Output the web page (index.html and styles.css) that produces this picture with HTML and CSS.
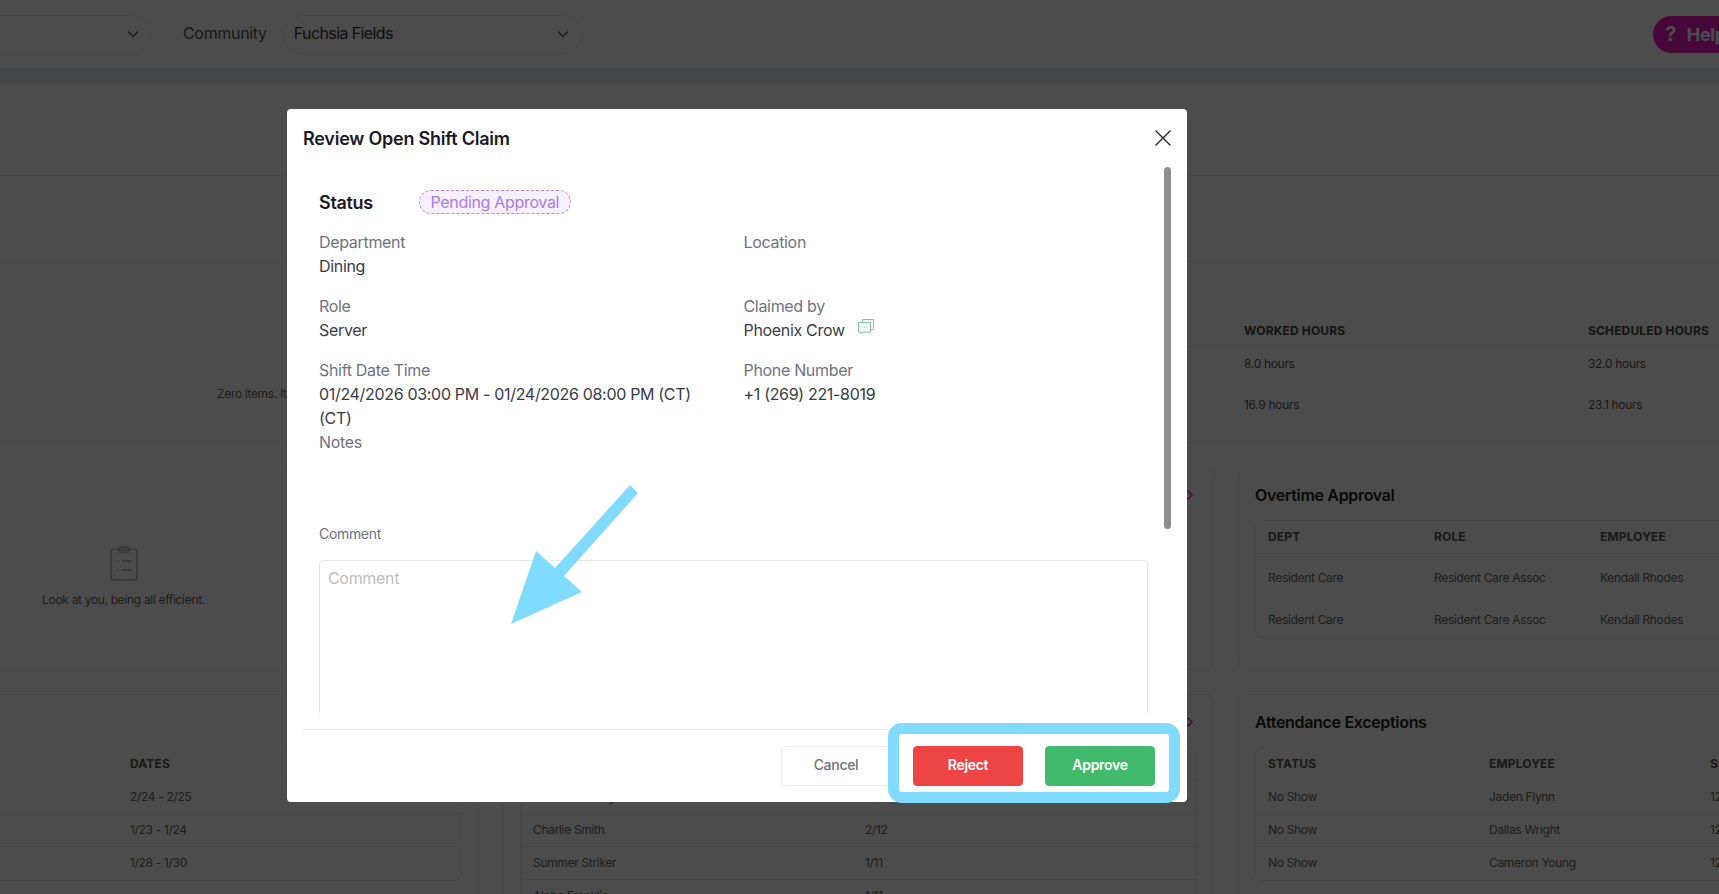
FILE: index.html
```html
<!DOCTYPE html>
<html lang="en">
<head>
<meta charset="utf-8">
<title>Review Open Shift Claim</title>
<link rel="stylesheet" href="styles.css">
</head>
<body>
<div class="page">
  <header class="topbar">
    <div class="pill pill-first"><svg class="chev" viewBox="0 0 16 16"><path d="M3 5.5 8 10.5 13 5.5"/></svg></div>
    <span class="top-label">Community</span>
    <div class="pill pill-second"><span>Fuchsia Fields</span><svg class="chev" viewBox="0 0 16 16"><path d="M3 5.5 8 10.5 13 5.5"/></svg></div>
    <div class="help"><span class="help-q">?</span><span>Help</span></div>
  </header>
  <div class="band"></div>
  <div class="strip strip-a"></div>
  <div class="strip strip-b"></div>
  <section class="hours">
    <p class="zero">Zero items. It's all clear here.</p>
    <div class="hours-table">
      <div class="hours-row hours-head"><span>WORKED HOURS</span><span>SCHEDULED HOURS</span></div>
      <div class="hours-row hours-one"><span>8.0 hours</span><span>32.0 hours</span></div>
      <div class="hours-row hours-two"><span>16.9 hours</span><span>23.1 hours</span></div>
    </div>
  </section>
  <section class="cards">
    <article class="card card-empty">
      <svg class="clip" viewBox="0 0 28 35"><rect x="1" y="3.500" width="26" height="30.500" rx="3"/><rect x="8.500" y="1" width="11" height="5.500" rx="2.500"/><path d="M7 15h1M12 15h9M7 24h1M12 24h9"/></svg>
      <p>Look at you, being all efficient.</p>
    </article>
    <article class="card">
      <h2>Open Shifts<svg class="more" viewBox="0 0 8 12"><path d="M1.500 1.500 6 6 1.500 10.500"/></svg></h2>
    </article>
    <article class="card">
      <h2>Overtime Approval</h2>
      <div class="tbl">
        <div class="tr th tr-ot"><span>DEPT</span><span>ROLE</span><span>EMPLOYEE</span></div>
        <div class="tr tr-ot tall"><span>Resident Care</span><span>Resident Care Assoc</span><span>Kendall Rhodes</span></div>
        <div class="tr tr-ot"><span>Resident Care</span><span>Resident Care Assoc</span><span>Kendall Rhodes</span></div>
      </div>
    </article>
    <article class="card">
      <h2>Time Off</h2>
      <div class="tbl">
        <div class="tr th tr-pto"><span>EMPLOYEE</span><span>DATES</span></div>
        <div class="tr tr-pto"><span>Avery Moss</span><span>2/24 - 2/25</span></div>
        <div class="tr tr-pto"><span>Blake Hart</span><span>1/23 - 1/24</span></div>
        <div class="tr tr-pto"><span>Riley Shaw</span><span>1/28 - 1/30</span></div>
      </div>
    </article>
    <article class="card">
      <h2>Birthdays<svg class="more" viewBox="0 0 8 12"><path d="M1.500 1.500 6 6 1.500 10.500"/></svg></h2>
      <div class="tbl">
        <div class="tr th tr-mid"><span>EMPLOYEE</span><span>DATE</span></div>
        <div class="tr tr-mid"><span>Jordan Lindsey</span><span>3/02</span></div>
        <div class="tr tr-mid"><span>Charlie Smith</span><span>2/12</span></div>
        <div class="tr tr-mid"><span>Summer Striker</span><span>1/11</span></div>
        <div class="tr tr-mid"><span>Alpha Franklin</span><span>1/11</span></div>
      </div>
    </article>
    <article class="card">
      <h2>Attendance Exceptions</h2>
      <div class="tbl">
        <div class="tr th tr-att"><span>STATUS</span><span>EMPLOYEE</span><span>SHIFT</span></div>
        <div class="tr tr-att"><span>No Show</span><span>Jaden Flynn</span><span>12/14</span></div>
        <div class="tr tr-att"><span>No Show</span><span>Dallas Wright</span><span>12/14</span></div>
        <div class="tr tr-att"><span>No Show</span><span>Cameron Young</span><span>12/14</span></div>
      </div>
    </article>
  </section>
</div>

<div class="overlay"></div>

<div class="modal" role="dialog">
  <div class="modal-head">
    <h1>Review Open Shift Claim</h1>
    <svg class="close" viewBox="0 0 16 16"><path d="M.5.5l15 15M15.500.5l-15 15"/></svg>
  </div>
  <div class="modal-body">
    <div class="scroll-content">
      <div class="status-line"><strong>Status</strong><span class="badge">Pending Approval</span></div>
      <div class="fields">
        <div class="field"><label>Department</label><div>Dining</div></div>
        <div class="field"><label>Location</label><div>&nbsp;</div></div>
        <div class="field"><label>Role</label><div>Server</div></div>
        <div class="field"><label>Claimed by</label><div class="claimed">Phoenix Crow<svg class="chat" viewBox="0 0 16 15"><path d="M4.500 3V.5h11v10h-2.500"/><path d="M.5 3.500h12v9.500H4.500L3 14.800V13H.5z"/><path d="M3.500 8.200h1M6 8.200h1M8.500 8.200h1"/></svg></div></div>
        <div class="field field-date"><label>Shift Date Time</label><div>01/24/2026 03:00 PM - 01/24/2026 08:00 PM (CT) (CT)</div></div>
        <div class="field"><label>Phone Number</label><div>+1 (269) 221-8019</div></div>
      </div>
      <div class="notes">Notes</div>
      <div class="comment-label">Comment</div>
      <div class="comment-box">Comment</div>
    </div>
    <div class="scrollbar"></div>
  </div>
  <div class="modal-foot">
    <button class="btn btn-cancel">Cancel</button>
    <button class="btn btn-reject">Reject</button>
    <button class="btn btn-approve">Approve</button>
  </div>
</div>

<svg class="arrow" viewBox="0 0 1719 894"><polygon points="630,485 638,493 564,576 582,592 511,624 536,551 555,568"/></svg>
<div class="highlight"></div>
</body>
</html>
```
FILE: styles.css
```css
* { box-sizing: border-box; }
html, body { margin: 0; height: 100%; overflow: hidden; background: #fff; }
body { font-family: Inter, "Noto Sans", sans-serif; letter-spacing: -.32px; color: #3a3c4a; width: 1719px; height: 894px; position: relative; }

/* ---- page behind the dialog ---- */
.page { width: 2200px; margin-left: -232px; color: #333; }
.topbar { height: 68px; display: flex; align-items: center; background: #fff; }
.pill { height: 39px; border: 1px solid #ececec; border-radius: 20px; display: flex; align-items: center; justify-content: space-between; font-size: 16px; line-height: 36px; letter-spacing: -.6px; color: #333; }
.pill span { padding-bottom: 2px; }
.pill-first { width: 383px; padding: 0 9px 0 0; justify-content: flex-end; }
.pill-second { width: 299px; padding: 0 10px 0 10px; }
.chev { width: 16px; height: 16px; fill: none; stroke: #666; stroke-width: 1.5; }
.top-label { margin: 0 16px 0 32px; padding-bottom: 2px; font-size: 16px; line-height: 36px; color: #555; }
.help { margin-left: 1071px; height: 37px; width: 140px; padding-left: 11px; background: #e81cc0; border-radius: 19px; display: flex; align-items: center; gap: 9px; color: #fff; font-size: 18px; font-weight: 700; }
.help-q { font-size: 20px; width: 14px; text-align: center; }
.band { height: 15px; background: #e8edf2; }
.strip-a { height: 93px; border-bottom: 1px solid #ececec; }
.strip-b { height: 86px; border-bottom: 1px solid #ececec; }
.hours { height: 181px; border-bottom: 1px solid #ececec; display: flex; }
.zero { margin: 124px 0 0 449px; font-size: 12px; color: #666; width: 400px; }
.hours-table { margin-left: 500px; padding-top: 53px; flex: 1; }
.hours-row { display: grid; grid-template-columns: 344px 1fr; padding-left: 127px; font-size: 12px; color: #555; align-items: center; }
.hours-head { height: 32px; font-weight: 700; color: #444; letter-spacing: .15px; border-bottom: 1px solid #ececec; }
.hours-one { height: 32px; }
.hours-two { height: 50px; }

.cards { display: grid; grid-template-columns: 711px 711px 712px; column-gap: 24px; row-gap: 24px; padding-top: 24px; grid-template-rows: 203px auto; }
.card { border: 1px solid #ececec; border-radius: 8px; padding: 15px 16px 16px; }
.card h2 { margin: 0 0 13px; font-size: 16px; font-weight: 600; line-height: 24px; color: #222; display: flex; justify-content: space-between; align-items: center; }
.more { width: 8px; height: 12px; fill: none; stroke: #e81cc0; stroke-width: 1.5; margin-right: 3px; }
.card-empty { display: flex; flex-direction: column; align-items: center; justify-content: center; padding-top: 31px; }
.card-empty p { margin: 8px 0 0; font-size: 12px; color: #666; }
.clip { width: 28px; height: 35px; fill: none; stroke: #c4c4c4; stroke-width: 2; margin-bottom: 3px; }
.tbl { border: 1px solid #ececec; border-radius: 8px; font-size: 12px; color: #666; }
.tr { display: grid; min-height: 33px; align-items: center; border-bottom: 1px solid #ececec; padding: 0 0 2px 12px; }
.tr:last-child { border-bottom: none; }
.th { font-weight: 700; color: #555; letter-spacing: .15px; }
.tall { min-height: 50px; }
.tr-ot { grid-template-columns: 166px 166px 1fr; }
.tr-att { grid-template-columns: 221px 221px 1fr; }
.tr-mid { grid-template-columns: 332px 1fr; }
.tr-pto { grid-template-columns: 332px 1fr; }

/* ---- dim layer ---- */
.overlay { position: absolute; inset: 0; background: rgba(0,0,0,.7); }

/* ---- dialog ---- */
.modal { position: absolute; left: 287px; top: 109px; width: 900px; height: 693px; background: #fff; border-radius: 4px; display: flex; flex-direction: column; }
.modal-head { height: 58px; display: flex; align-items: center; justify-content: space-between; padding: 0 16px; }
.modal-head h1 { margin: 0; font-size: 18px; font-weight: 600; letter-spacing: -.24px; color: #1a1a28; }
.close { width: 16px; height: 16px; fill: none; stroke: #222; stroke-width: 1.3; }
.modal-body { flex: 1; display: flex; min-height: 0; overflow: hidden; position: relative; padding-bottom: 16px; }
.scroll-content { flex: 1; padding: 23px 39px 0 32px; overflow: hidden; }
.scrollbar { position: absolute; right: 16px; top: 0; width: 7px; height: 362px; background: #8e8e8e; border-radius: 4px; }
.status-line { display: flex; align-items: center; height: 24px; gap: 46px; margin-bottom: 16px; }
.status-line strong { font-size: 18px; font-weight: 600; color: #1a1a28; }
.badge { height: 24px; width: 152px; border: 1px dashed #b48ae6; background: #f6effd; border-radius: 12px; color: #a87de0; font-size: 16px; display: flex; align-items: center; justify-content: center; }
.fields { display: grid; grid-template-columns: 424.500px 1fr; }
.field { font-size: 16px; line-height: 24px; color: #3a3c4a; padding-right: 30px; min-height: 64px; }
.field label { display: block; color: #6f7285; }
.field-date { min-height: 72px; }
.claimed { display: flex; align-items: center; }
.chat { width: 16px; height: 15px; fill: none; stroke: #7cc49a; stroke-width: 1; margin: -8px 0 0 13px; }
.notes { font-size: 16px; line-height: 24px; color: #6f7285; }
.comment-label { margin-top: 68px; font-size: 14px; line-height: 24px; color: #6f7285; }
.comment-box { margin-top: 14px; height: 300px; border: 1px solid #e6e6e6; border-radius: 4px; padding: 5px 8px; font-size: 16px; line-height: 24px; color: #bdbdbd; }
.modal-foot { height: 73px; margin: 0 16px; border-top: 1px solid #e8e8e8; padding: 16px 16px 0 0; display: flex; justify-content: flex-end; gap: 22px; }
.btn { width: 110px; height: 40px; border-radius: 4px; border: 1px solid #ededed; background: #fff; font: 500 14px Inter, sans-serif; letter-spacing: -.3px; color: #6f7285; padding: 0 0 3px; }
.btn-reject { background: #ef4444; border-color: #ef4444; color: #fff; font-weight: 600; }
.btn-approve { background: #41bb6b; border-color: #41bb6b; color: #fff; font-weight: 600; }

/* ---- annotations over the screenshot ---- */
.arrow { position: absolute; inset: 0; width: 1719px; height: 894px; }
.arrow polygon { fill: #80dbff; }
.highlight { position: absolute; left: 888px; top: 723px; width: 292px; height: 80px; border: 11px solid #80dbff; border-radius: 14px; }
```
